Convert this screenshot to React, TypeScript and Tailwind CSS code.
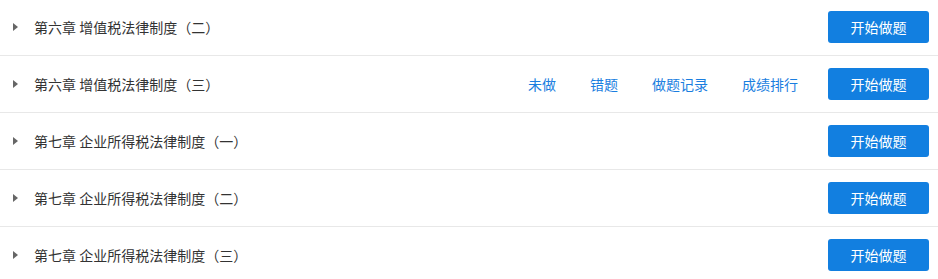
import React from "react";

const rows = [
  { title: "第六章 增值税法律制度（二）", links: false },
  { title: "第六章 增值税法律制度（三）", links: true },
  { title: "第七章 企业所得税法律制度（一）", links: false },
  { title: "第七章 企业所得税法律制度（二）", links: false },
  { title: "第七章 企业所得税法律制度（三）", links: false },
];

export default function App() {
  return (
    <div
      className="w-[938px] h-[279px] overflow-hidden bg-white"
      style={{ fontFamily: '"Noto Sans CJK SC", "Noto Sans", sans-serif' }}
    >
      <div className="-mt-px">
        {rows.map((r, i) => (
          <div
            key={i}
            className="flex items-center h-[57px] border-b border-[#e8e8e8] pl-[13px] pr-[9px]"
          >
            <span className="w-0 h-0 border-y-[4px] border-y-transparent border-l-[5px] border-l-[#666] mr-[16px]" />
            <span className="text-[14px] text-[#333] flex-1">{r.title}</span>
            {r.links && (
              <div className="flex items-center gap-[34px] mr-[30px] text-[14px] text-[#1a7ee0]">
                <span>未做</span>
                <span>错题</span>
                <span>做题记录</span>
                <span>成绩排行</span>
              </div>
            )}
            <button className="w-[101px] h-[32px] rounded-[3px] bg-[#127fe0] text-white text-[14px] flex items-center justify-center">
              开始做题
            </button>
          </div>
        ))}
      </div>
    </div>
  );
}
